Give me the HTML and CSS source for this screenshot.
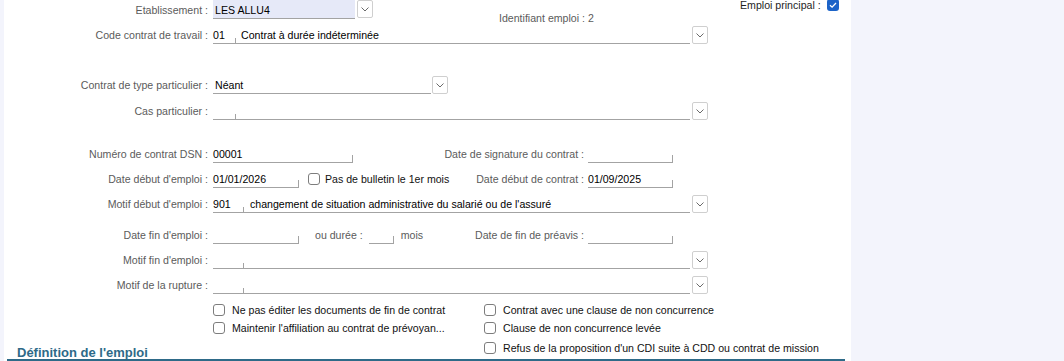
FILE: index.html
```html
<!DOCTYPE html>
<html lang="fr">
<head>
<meta charset="utf-8">
<title>Emploi</title>
<link rel="stylesheet" href="styles.css">
</head>
<body>
<div class="panel">
  <div class="row r1">
    <span class="lbl">Etablissement :</span>
    <span class="fld etab">LES ALLU4</span>
    <span class="dd dd-top"><svg width="8" height="5" viewBox="0 0 8 5"><path d="M0.5 0.5 L4 4 L7.5 0.5" stroke="#6a6a6a" fill="none"/></svg></span>
    <span class="ident">Identifiant emploi : 2</span>
    <span class="principal">Emploi principal :<span class="cb checked"><svg width="12" height="12" viewBox="0 0 12 12"><path d="M3 6.2 L5.1 8.2 L9 4" stroke="#fff" stroke-width="1.3" fill="none"/></svg></span></span>
  </div>

  <div class="row r2">
    <span class="lbl">Code contrat de travail :</span>
    <span class="fld code c23 tick">01</span>
    <span class="fld long l454 pad5">Contrat à durée indéterminée</span>
    <span class="dd"><svg width="8" height="5" viewBox="0 0 8 5"><path d="M0.5 0.5 L4 4 L7.5 0.5" stroke="#6a6a6a" fill="none"/></svg></span>
  </div>

  <div class="row r4">
    <span class="lbl">Contrat de type particulier :</span>
    <span class="fld w217">Néant</span>
    <span class="dd dd1"><svg width="8" height="5" viewBox="0 0 8 5"><path d="M0.5 0.5 L4 4 L7.5 0.5" stroke="#6a6a6a" fill="none"/></svg></span>
  </div>

  <div class="row r5">
    <span class="lbl">Cas particulier :</span>
    <span class="fld code c23 tick"></span>
    <span class="fld long l454"></span>
    <span class="dd"><svg width="8" height="5" viewBox="0 0 8 5"><path d="M0.5 0.5 L4 4 L7.5 0.5" stroke="#6a6a6a" fill="none"/></svg></span>
  </div>

  <div class="row r6">
    <span class="lbl">Numéro de contrat DSN :</span>
    <span class="left"><span class="fld w140 tick tall">00001</span></span>
    <span class="rlbl">Date de signature du contrat :</span>
    <span class="fld w85 tick tall rfld"></span>
  </div>

  <div class="row r7">
    <span class="lbl">Date début d'emploi :</span>
    <span class="left">
      <span class="fld w86 tick tall">01/01/2026</span>
      <span class="check ck-inline"><span class="cb"></span><span class="val">Pas de bulletin le 1er mois</span></span>
    </span>
    <span class="rlbl">Date début de contrat :</span>
    <span class="fld w85 tick tall rfld">01/09/2025</span>
  </div>

  <div class="row r8">
    <span class="lbl">Motif début d'emploi :</span>
    <span class="fld code c31 tick">901</span>
    <span class="fld long l446 pad6">changement de situation administrative du salarié ou de l'assuré</span>
    <span class="dd"><svg width="8" height="5" viewBox="0 0 8 5"><path d="M0.5 0.5 L4 4 L7.5 0.5" stroke="#6a6a6a" fill="none"/></svg></span>
  </div>

  <div class="row r9">
    <span class="lbl">Date fin d'emploi :</span>
    <span class="left">
      <span class="fld w86 tick tall"></span>
      <span class="lbl2 ou">ou durée :</span>
      <span class="fld w25 tick tall duree"></span>
      <span class="lbl2 mois">mois</span>
    </span>
    <span class="rlbl">Date de fin de préavis :</span>
    <span class="fld w85 tick tall rfld"></span>
  </div>

  <div class="row r10">
    <span class="lbl">Motif fin d'emploi :</span>
    <span class="fld code c31 tick"></span>
    <span class="fld long l446"></span>
    <span class="dd"><svg width="8" height="5" viewBox="0 0 8 5"><path d="M0.5 0.5 L4 4 L7.5 0.5" stroke="#6a6a6a" fill="none"/></svg></span>
  </div>

  <div class="row r11">
    <span class="lbl">Motif de la rupture :</span>
    <span class="fld code c31 tick"></span>
    <span class="fld long l446"></span>
    <span class="dd"><svg width="8" height="5" viewBox="0 0 8 5"><path d="M0.5 0.5 L4 4 L7.5 0.5" stroke="#6a6a6a" fill="none"/></svg></span>
  </div>

  <div class="crow c1">
    <span class="check cl"><span class="cb"></span><span class="val">Ne pas éditer les documents de fin de contrat</span></span>
    <span class="check"><span class="cb"></span><span class="val">Contrat avec une clause de non concurrence</span></span>
  </div>
  <div class="crow c2">
    <span class="check cl"><span class="cb"></span><span class="val">Maintenir l'affiliation au contrat de prévoyan...</span></span>
    <span class="check"><span class="cb"></span><span class="val">Clause de non concurrence levée</span></span>
  </div>
  <div class="section">
    <h2 class="title">Définition de l'emploi</h2>
    <span class="check"><span class="cb"></span><span class="val">Refus de la proposition d'un CDI suite à CDD ou contrat de mission</span></span>
  </div>
</div>
</body>
</html>
```

FILE: styles.css
```css
html, body {
  margin: 0;
  padding: 0;
}
body {
  background: #f3f4fc;
  font-family: "Liberation Sans", Arial, sans-serif;
  font-size: 10.6px;
  color: #000;
  overflow: hidden;
}
.panel {
  margin-left: 4px;
  width: 847px;
  height: 361px;
  background: #fff;
  display: flex;
  flex-direction: column;
}
.row {
  display: flex;
  align-items: flex-end;
  height: 25px;
  flex: none;
}
.lbl {
  width: 204px;
  flex: none;
  text-align: right;
  color: #5b5b5b;
  line-height: 17px;
  white-space: nowrap;
}
.lbl2 {
  color: #5b5b5b;
  line-height: 17px;
  white-space: nowrap;
}
.rlbl {
  width: 141px;
  flex: none;
  text-align: right;
  color: #5b5b5b;
  line-height: 17px;
  white-space: nowrap;
}
.fld {
  position: relative;
  flex: none;
  height: 17px;
  line-height: 18px;
  border-bottom: 1px solid #a3a3a3;
  white-space: nowrap;
  overflow: visible;
  box-sizing: content-box;
}
.row > .lbl + .fld {
  margin-left: 5px;
}
.tick::after {
  content: "";
  position: absolute;
  right: 0;
  bottom: 0;
  width: 1px;
  height: 5px;
  background: #a3a3a3;
}
.tick.tall::after { height: 7px; }
.c23 { width: 23px; }
.c31 { width: 31px; }
.l454 { width: 454px; }
.l446 { width: 446px; }
.pad5 { padding-left: 5px; width: 449px; }
.l446.pad6 { padding-left: 6px; width: 440px; }
.w217 { width: 216px; padding-left: 2px; }
.w140 { width: 140px; }
.w86 { width: 86px; }
.w85 { width: 85px; }
.w25 { width: 25px; }
.rfld { margin-left: 4px; }
.left {
  margin-left: 5px;
  width: 230px;
  flex: none;
  display: flex;
  align-items: flex-end;
}
.ou { margin-left: 16px; }
.duree { margin-left: 6px; }
.mois { margin-left: 7px; }

.dd {
  flex: none;
  width: 14px;
  height: 16px;
  margin-left: 2px;
  border: 1px solid #cfcfcf;
  border-radius: 2px;
  background: #fff;
  display: flex;
  align-items: center;
  justify-content: center;
}
.dd1 { margin-left: 1px; }

/* row positions */
.r1 {
  height: 20px;
  align-items: flex-start;
}
.r1 .lbl { line-height: 20px; }
.etab {
  width: 140px;
  height: 18px;
  line-height: 20px;
  padding-left: 2px;
  background: #e6e9f8;
  border-bottom: 1px solid #a3a3a3;
  margin-left: 5px;
}
.dd-top { height: 16px; }
.ident {
  width: 241px;
  flex: none;
  margin-left: 126px;
  margin-top: 11px;
  color: #5b5b5b;
  line-height: 14px;
  white-space: nowrap;
}
.principal {
  margin-top: -2px;
  display: flex;
  align-items: center;
  color: #1e1e1e;
  line-height: 14px;
  white-space: nowrap;
}
.principal .cb { margin-left: 6px; }
.r2 { height: 24px; }
.r4 { margin-top: 25px; }
.r5 { height: 26px; }
.r6 { margin-top: 18px; }
.r9 { margin-top: 6px; }

.cb {
  flex: none;
  width: 10px;
  height: 10px;
  border: 1px solid #7d7d7d;
  border-radius: 3px;
  background: #fff;
  display: inline-block;
  position: relative;
}
.cb.checked {
  width: 12px;
  height: 12px;
  border: none;
  background: #1c63c8;
  display: flex;
}
.check {
  display: flex;
  align-items: center;
  white-space: nowrap;
  height: 18px;
}
.check .val { margin-left: 7px; color: #111; }
.ck-inline {
  margin-left: 9px;
  height: 17px;
  padding-bottom: 1px;
}
.ck-inline .val { margin-left: 5px; }

.crow {
  display: flex;
  align-items: center;
  height: 18px;
  padding-left: 209px;
  flex: none;
}
.c1 { margin-top: 7px; }
.cl { width: 271px; flex: none; }

.section {
  display: flex;
  align-items: center;
  height: 22px;
  margin-left: 3px;
  margin-right: 6px;
  border-bottom: 2px solid #2e6a88;
  flex: none;
}
.title {
  margin: 0;
  width: 467px;
  padding-left: 10px;
  padding-top: 9px;
  font-size: 13px;
  font-weight: bold;
  color: #2e6a88;
  line-height: 16px;
  flex: none;
}
```
